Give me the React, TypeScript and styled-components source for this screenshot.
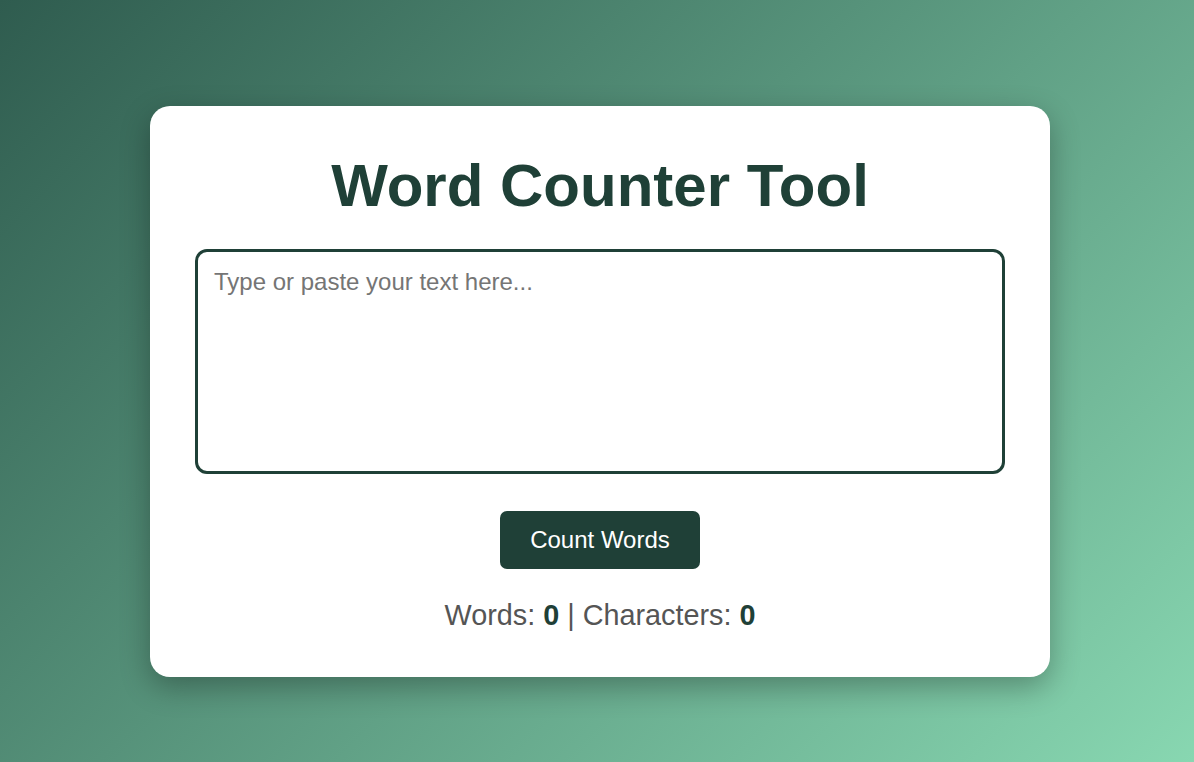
import React, { useState } from "react";
import styled, { createGlobalStyle } from "styled-components";

const GlobalStyle = createGlobalStyle`
  * { box-sizing: border-box; }
  html, body { margin: 0; padding: 0; }
  body {
    font-family: "Liberation Sans", Arial, sans-serif;
    background: linear-gradient(135deg, #2f5c4f, #88d7b1);
    min-height: 100vh;
  }
`;

const Page = styled.div`
  min-height: 100vh;
  display: flex;
  align-items: center;
  justify-content: center;
  padding: 21px 0 0 6px;
`;

const Card = styled.div`
  width: 900px;
  background: #ffffff;
  border-radius: 20px;
  padding: 47px 45px 45px;
  box-shadow: 0 10px 30px rgba(0, 0, 0, 0.3);
  display: flex;
  flex-direction: column;
  align-items: center;
`;

const Title = styled.h1`
  margin: 0 0 30px;
  font-size: 60px;
  line-height: 66px;
  font-weight: 700;
  color: #1f4037;
  text-align: center;
`;

const TextArea = styled.textarea`
  width: 100%;
  height: 225px;
  border: 3px solid #1f4037;
  border-radius: 12px;
  padding: 16px 16px;
  font-family: "Liberation Sans", Arial, sans-serif;
  font-size: 24px;
  color: #333;
  resize: none;
  outline: none;
  &::placeholder {
    color: #757575;
  }
`;

const Button = styled.button`
  margin-top: 37px;
  padding: 15px 30px;
  border: none;
  border-radius: 7px;
  background: #1f4037;
  color: #ffffff;
  font-family: "Liberation Sans", Arial, sans-serif;
  font-size: 24px;
  cursor: pointer;
`;

const Result = styled.p`
  margin: 30px 0 0;
  font-size: 28.8px;
  color: #555555;
`;

const Count = styled.strong`
  color: #1f4037;
`;

export default function App() {
  const [text, setText] = useState("");
  const [counts, setCounts] = useState({ words: 0, chars: 0 });

  const count = () => {
    const trimmed = text.trim();
    setCounts({
      words: trimmed ? trimmed.split(/\s+/).length : 0,
      chars: text.length,
    });
  };

  return (
    <>
      <GlobalStyle />
      <Page>
        <Card>
          <Title>Word Counter Tool</Title>
          <TextArea
            placeholder="Type or paste your text here..."
            value={text}
            onChange={(e) => setText(e.target.value)}
          />
          <Button onClick={count}>Count Words</Button>
          <Result>
            Words: <Count>{counts.words}</Count> | Characters: <Count>{counts.chars}</Count>
          </Result>
        </Card>
      </Page>
    </>
  );
}
